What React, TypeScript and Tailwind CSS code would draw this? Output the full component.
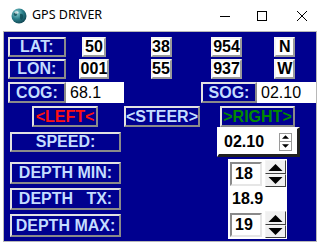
import React from "react";

// raised 3D frame used by the VB style labels and buttons
const raised =
  "border-2 border-t-[#e2e2e2] border-l-[#e2e2e2] border-r-[#8a8a8a] border-b-[#8a8a8a]";

const Label = ({
  children,
  className,
  color = "text-[#c4ddff]",
}: {
  children: React.ReactNode;
  className: string;
  color?: string;
}) => (
  <div
    className={`${raised} flex items-center justify-center bg-[#00008f] text-[16px] font-bold leading-none whitespace-pre ${color} ${className}`}
  >
    {children}
  </div>
);

const Value = ({ children, className }: { children: React.ReactNode; className: string }) => (
  <div
    className={`flex items-center justify-center border-2 border-t-[#f4f4f4] border-l-[#f4f4f4] border-r-[#9a9a9a] border-b-[#9a9a9a] bg-white text-[16px] font-bold leading-none text-black ${className}`}
  >
    {children}
  </div>
);

const Cell = ({ w, children }: { w: string; children: React.ReactNode }) => (
  <div className={`flex justify-center ${w}`}>{children}</div>
);

const Tri = ({ up, className }: { up: boolean; className: string }) => (
  <svg viewBox="0 0 12 6" className={className}>
    <polygon points={up ? "0,6 12,6 6,0" : "0,0 12,0 6,6"} fill="#000" />
  </svg>
);

const DepthSpin = ({ value }: { value: string }) => (
  <div className="flex h-[29px] w-[59px] items-center gap-[3px] bg-white pl-[2px]">
    <div className="flex h-[24px] w-[32px] items-center border-2 border-t-[#8a8a8a] border-l-[#8a8a8a] border-r-[#e6e6e6] border-b-[#e6e6e6] pl-[3px] text-[16px] font-bold leading-none">
      {value}
    </div>
    <div className="flex w-[21px] flex-col">
      <div className="flex h-[14px] items-center justify-center border border-b-[#404040] border-r-[#404040] border-t-[#f4f4f4] border-l-[#f4f4f4] bg-[#f0f0f0]">
        <Tri up className="h-[7px] w-[15px]" />
      </div>
      <div className="flex h-[13px] items-center justify-center border border-b-[#404040] border-r-[#404040] border-t-[#f4f4f4] border-l-[#f4f4f4] bg-[#f0f0f0]">
        <Tri up={false} className="h-[7px] w-[15px]" />
      </div>
    </div>
  </div>
);

const Globe = () => (
  <svg viewBox="0 0 16 16" className="h-[16px] w-[16px]">
    <defs>
      <radialGradient id="g" cx="0.35" cy="0.3" r="0.8">
        <stop offset="0" stopColor="#8fd3d6" />
        <stop offset="0.5" stopColor="#2a7f8a" />
        <stop offset="1" stopColor="#0d3d4a" />
      </radialGradient>
    </defs>
    <circle cx="8" cy="8" r="7.5" fill="url(#g)" />
    <path d="M4 4 C6 3 7 5 6 7 C5 9 3 8 2.5 6 Z M9 6 C11 5 13 7 12 10 C11 13 9 12 9 10 Z" fill="#0f4b54" opacity="0.8" />
    <ellipse cx="5.5" cy="4.5" rx="2" ry="1.2" fill="#ffffff" opacity="0.7" />
  </svg>
);

export default function App() {
  return (
    <div className="flex h-[245px] w-[320px] flex-col overflow-hidden bg-white font-['Liberation_Sans',Arial,sans-serif]">
      {/* title bar */}
      <div className="flex h-[31px] shrink-0 items-center">
        <div className="ml-[11px]">
          <Globe />
        </div>
        <span className="ml-[5px] font-['Noto_Sans',sans-serif] text-[12.5px] text-black">GPS DRIVER</span>
        <svg viewBox="0 0 10 10" className="ml-auto h-[10px] w-[10px]">
          <line x1="0" y1="5.5" x2="10" y2="5.5" stroke="#000" strokeWidth="1" />
        </svg>
        <svg viewBox="0 0 10 10" className="ml-[27px] h-[10px] w-[10px]">
          <rect x="0.5" y="0.5" width="9" height="9" fill="none" stroke="#000" strokeWidth="1" />
        </svg>
        <svg viewBox="0 0 10 10" className="ml-[30px] mr-[13px] h-[10px] w-[10px]">
          <path d="M0 0 L10 10 M10 0 L0 10" stroke="#000" strokeWidth="1" />
        </svg>
      </div>

      {/* form */}
      <div className="mx-[3px] flex h-[211px] shrink-0 flex-col border border-[#b8b8b8] bg-[#00008f] pt-[5px]">
        <div className="flex h-[20px] pl-[4px]">
          <Label className="w-[58px]">LAT:</Label>
          <Cell w="w-[57px]"><Value className="w-[24px]">50</Value></Cell>
          <Cell w="w-[78px]"><Value className="w-[21px]">38</Value></Cell>
          <Cell w="w-[54px]"><Value className="w-[31px]">954</Value></Cell>
          <Cell w="w-[63px]"><Value className="w-[21px]">N</Value></Cell>
        </div>
        <div className="mt-[2px] flex h-[20px] pl-[4px]">
          <Label className="w-[58px]">LON:</Label>
          <Cell w="w-[57px]"><Value className="w-[30px]">001</Value></Cell>
          <Cell w="w-[78px]"><Value className="w-[21px]">55</Value></Cell>
          <Cell w="w-[54px]"><Value className="w-[31px]">937</Value></Cell>
          <Cell w="w-[63px]"><Value className="w-[21px]">W</Value></Cell>
        </div>
        <div className="mt-[3px] flex h-[21px] pl-[4px]">
          <Label className="w-[58px]">COG:</Label>
          <div className="flex w-[58px] items-center bg-white pl-[4px] text-[16px] leading-none text-black">68.1</div>
          <Label className="ml-[77px] w-[56px]">SOG:</Label>
          <div className="flex w-[59px] items-center bg-white pl-[4px] text-[16px] leading-none text-black">02.10</div>
        </div>
        <div className="mt-[3px] flex h-[21px] pl-[4px]">
          <Label className="ml-[24px] w-[66px]" color="text-[#ff1010]">{"<LEFT<"}</Label>
          <Label className="ml-[26px] w-[76px]">{"<STEER>"}</Label>
          <Label className="ml-[20px] w-[75px]" color="text-[#008a00]">{">RIGHT>"}</Label>
        </div>

        <div className="flex pl-[6px]">
          <div className="flex w-[111px] flex-col">
            <Label className="mt-[5px] h-[20px] w-full">SPEED:</Label>
            <Label className="mt-[10px] h-[22px] w-full">DEPTH MIN:</Label>
            <Label className="mt-[4px] h-[22px] w-full">{"DEPTH   TX:"}</Label>
            <Label className="mt-[4px] h-[23px] w-full">DEPTH MAX:</Label>
          </div>
          <div className="ml-[96px] flex flex-col">
            <div className="flex h-[30px] w-[83px] items-center border-t-2 border-l-2 border-r-[3px] border-b-[3px] border-t-white border-l-white border-r-[#202020] border-b-[#202020] bg-white pl-[5px]">
              <span className="text-[16px] font-bold leading-none">02.10</span>
              <div className="ml-auto mr-[5px] flex h-[18px] w-[13px] flex-col border border-[#9a9a9a]">
                <div className="flex flex-1 items-center justify-center border-b border-[#9a9a9a]">
                  <Tri up className="h-[4px] w-[7px]" />
                </div>
                <div className="flex flex-1 items-center justify-center">
                  <Tri up={false} className="h-[4px] w-[7px]" />
                </div>
              </div>
            </div>
            <div className="ml-[11px] mt-[2px]">
              <DepthSpin value="18" />
            </div>
            <div className="ml-[11px] flex h-[22px] w-[59px] items-center bg-white pl-[4px] text-[16px] font-bold leading-none">
              18.9
            </div>
            <div className="ml-[11px]">
              <DepthSpin value="19" />
            </div>
          </div>
        </div>
      </div>
    </div>
  );
}
